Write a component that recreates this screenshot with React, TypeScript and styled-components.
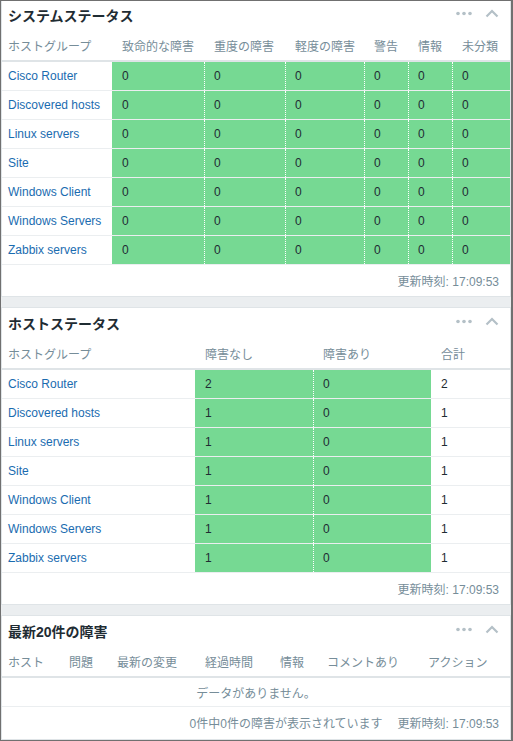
import styled, { createGlobalStyle } from "styled-components";

const groups = [
  "Cisco Router",
  "Discovered hosts",
  "Linux servers",
  "Site",
  "Windows Client",
  "Windows Servers",
  "Zabbix servers",
];

const severities = ["致命的な障害", "重度の障害", "軽度の障害", "警告", "情報", "未分類"];
const hostCounts = [2, 1, 1, 1, 1, 1, 1];
const problemColumns = ["ホスト", "問題", "最新の変更", "経過時間", "情報", "コメントあり", "アクション"];

const updated = "更新時刻: 17:09:53";

const GlobalStyle = createGlobalStyle`
  html, body {
    margin: 0;
    padding: 0;
    background: #ebeef0;
  }
  body {
    font-family: "Liberation Sans", Arial, "Noto Sans CJK JP", sans-serif;
    font-size: 12px;
    color: #1f2c33;
  }
`;

function WidgetTools() {
  return (
    <Tools>
      <svg width="16" height="5" viewBox="0 0 16 5">
        <circle cx="2" cy="2.5" r="1.8" fill="#b4c0c7" />
        <circle cx="8" cy="2.5" r="1.8" fill="#b4c0c7" />
        <circle cx="14" cy="2.5" r="1.8" fill="#b4c0c7" />
      </svg>
      <svg width="14" height="9" viewBox="0 0 14 9">
        <path d="M1.5 7.5 L7 2 L12.5 7.5" fill="none" stroke="#b4c0c7" strokeWidth="2.2" />
      </svg>
    </Tools>
  );
}

function WidgetHeader({ title }: { title: string }) {
  return (
    <Header>
      <Title>{title}</Title>
      <WidgetTools />
    </Header>
  );
}

export default function App() {
  return (
    <>
      <GlobalStyle />
      <Frame>
        <Widget>
          <WidgetHeader title="システムステータス" />
          <HeadRow $cols={systemCols}>
            <Th>ホストグループ</Th>
            {severities.map((s) => (
              <Th key={s}>{s}</Th>
            ))}
          </HeadRow>
          {groups.map((g) => (
            <Row $cols={systemCols} key={g}>
              <Cell>
                <Link>{g}</Link>
              </Cell>
              {severities.map((s) => (
                <Ok key={s}>0</Ok>
              ))}
            </Row>
          ))}
          <Footer>{updated}</Footer>
        </Widget>

        <Widget>
          <WidgetHeader title="ホストステータス" />
          <HeadRow $cols={hostCols}>
            <Th>ホストグループ</Th>
            <Th>障害なし</Th>
            <Th>障害あり</Th>
            <Th>合計</Th>
          </HeadRow>
          {groups.map((g, i) => (
            <Row $cols={hostCols} key={g}>
              <Cell>
                <Link>{g}</Link>
              </Cell>
              <Ok>{hostCounts[i]}</Ok>
              <Ok>0</Ok>
              <Cell>{hostCounts[i]}</Cell>
            </Row>
          ))}
          <Footer>{updated}</Footer>
        </Widget>

        <Widget>
          <WidgetHeader title="最新20件の障害" />
          <HeadRow $cols={problemCols}>
            {problemColumns.map((c) => (
              <Th key={c}>{c}</Th>
            ))}
          </HeadRow>
          <EmptyRow>データがありません。</EmptyRow>
          <Footer>
            <span>0件中0件の障害が表示されています</span>
            <span>{updated}</span>
          </Footer>
        </Widget>
      </Frame>
    </>
  );
}

const systemCols = "110px 92px 81px 79px 44px 44px 1fr";
const hostCols = "193px 118px 118px 1fr";
const problemCols = "57px 48px 88px 75px 47px 101px 1fr";

const Frame = styled.div`
  width: 513px;
  height: 741px;
  box-sizing: border-box;
  border: 1px solid #707070;
  border-right-width: 2px;
  background: #ebeef0;
  overflow: hidden;
  display: flex;
  flex-direction: column;
`;

const Widget = styled.section`
  flex: none;
  background: #fff;
  border: 1px solid #dfe4e7;
  &:first-child {
    margin-top: -2px;
  }
  & + & {
    margin-top: 10px;
  }
  &:last-child {
    flex: 1;
  }
`;

const Header = styled.div`
  height: 30px;
  display: flex;
  align-items: center;
  justify-content: space-between;
  padding: 0 11px 0 6px;
`;

const Title = styled.h4`
  margin: 0;
  font-size: 14px;
  font-weight: bold;
  color: #1f2c33;
`;

const Tools = styled.div`
  display: flex;
  align-items: center;
  gap: 13px;
  margin-top: -3px;
`;

const HeadRow = styled.div<{ $cols: string }>`
  display: grid;
  grid-template-columns: ${(p) => p.$cols};
  height: 32px;
  box-sizing: border-box;
  border-bottom: 2px solid #dfe4e7;
`;

const Th = styled.div`
  display: flex;
  align-items: center;
  padding-left: 10px;
  color: #768d99;
  white-space: nowrap;
  &:first-child {
    padding-left: 6px;
  }
`;

const Row = styled.div<{ $cols: string }>`
  display: grid;
  grid-template-columns: ${(p) => p.$cols};
  height: 29px;
  box-sizing: border-box;
  border-bottom: 1px solid #ebeef0;
`;

const Cell = styled.div`
  display: flex;
  align-items: center;
  padding-left: 10px;
  color: #1f2c33;
  &:first-child {
    padding-left: 6px;
  }
`;

const Ok = styled(Cell)`
  background: #76d993;
  & + & {
    border-left: 1px dotted #fff;
    padding-left: 9px;
  }
`;

const Link = styled.span`
  color: #1a6cb0;
  white-space: nowrap;
`;

const EmptyRow = styled.div`
  height: 29px;
  box-sizing: border-box;
  border-bottom: 1px solid #ebeef0;
  display: flex;
  align-items: center;
  justify-content: center;
  color: #768d99;
`;

const Footer = styled.div`
  height: 31px;
  display: flex;
  align-items: center;
  justify-content: flex-end;
  gap: 15px;
  padding-right: 11px;
  color: #768d99;
`;
